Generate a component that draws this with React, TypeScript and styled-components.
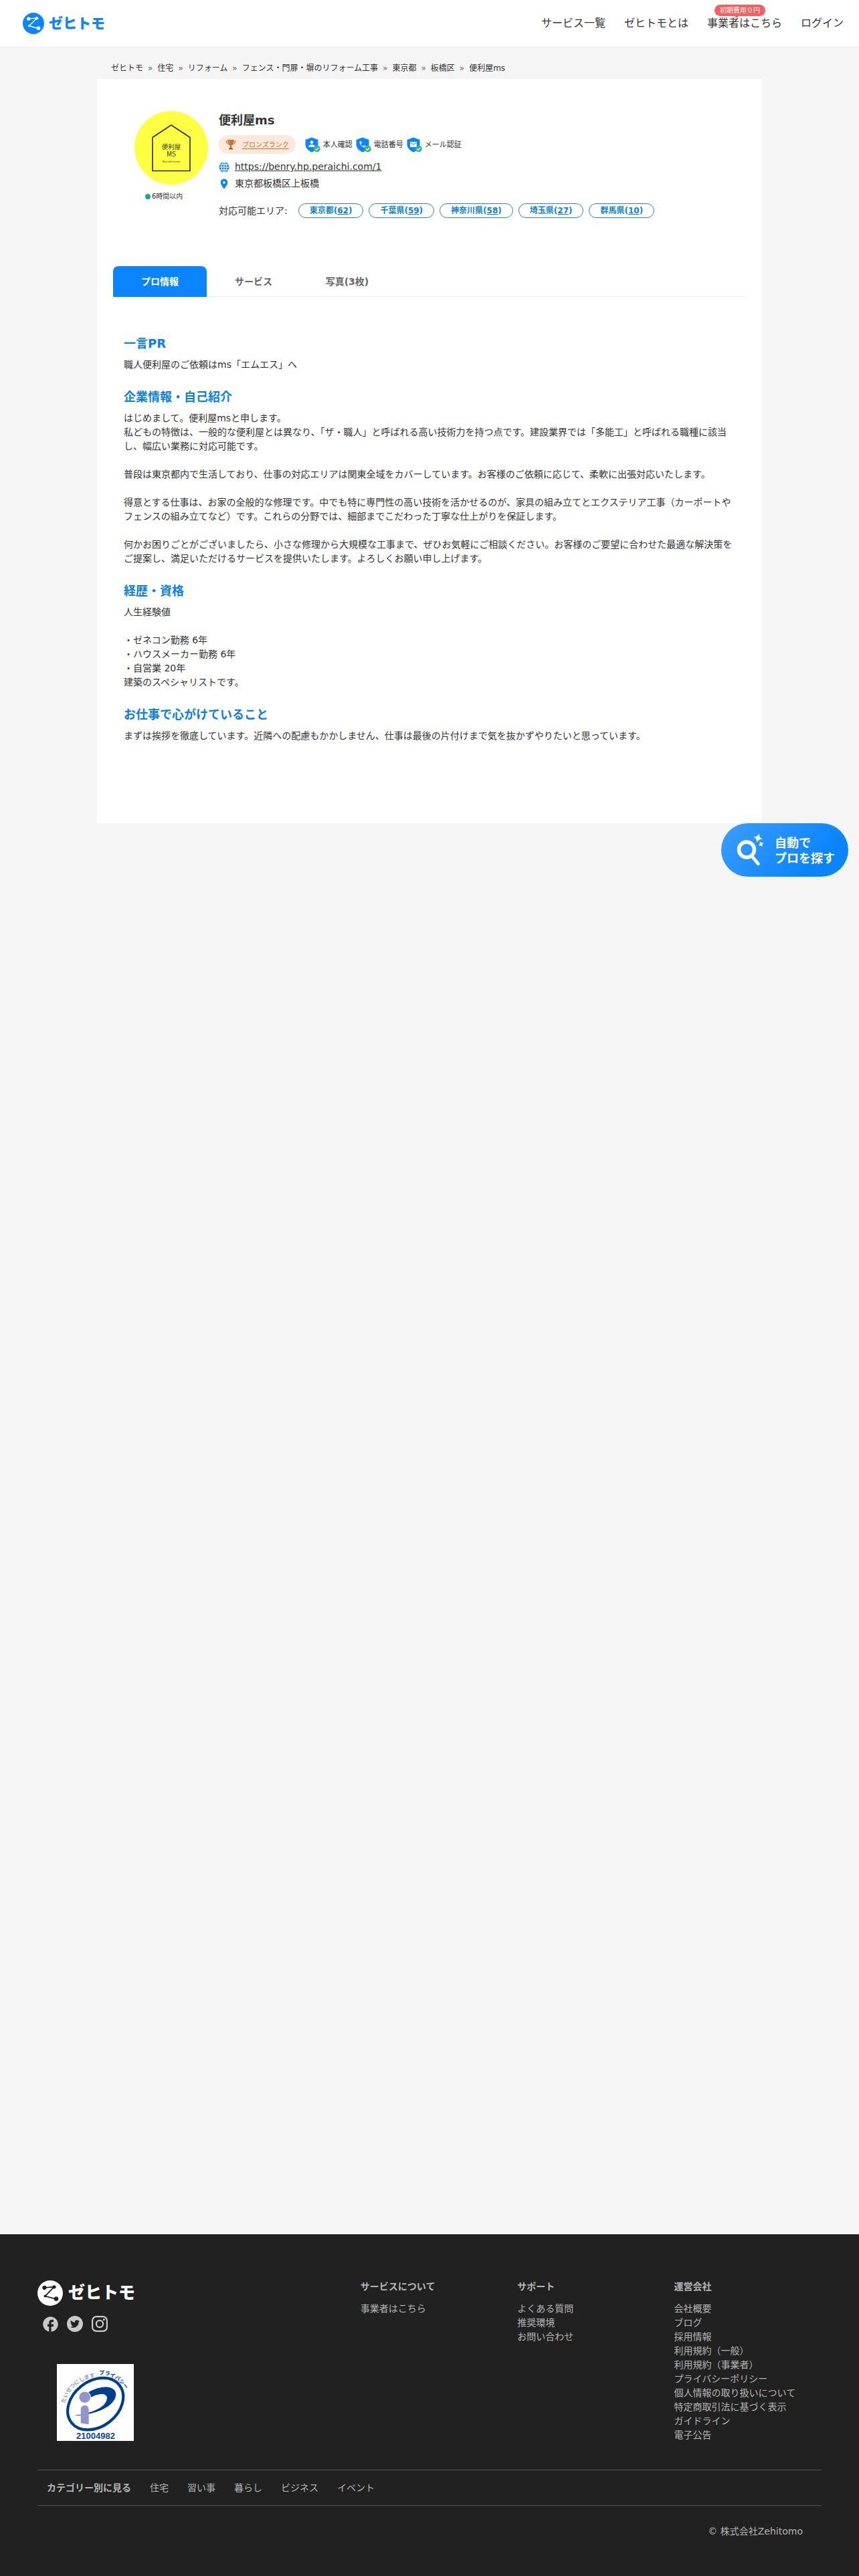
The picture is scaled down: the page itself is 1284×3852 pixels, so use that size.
import React, { useState } from "react";
import styled, { createGlobalStyle, css } from "styled-components";
import { FaTwitter } from "react-icons/fa";
import { MdEmail, MdFacebook, MdPerson, MdPhone, MdPlace } from "react-icons/md";

const color = {
  blue: "#0a85ff",
  heading: "#0a80e3",
  text: "#333333",
  page: "#f5f5f5",
  bronze: "#c8742f",
  footer: "#212121",
  footerText: "#b5b5b5",
};

const GlobalStyle = createGlobalStyle`
  *, *::before, *::after { box-sizing: border-box; }
  body {
    margin: 0;
    background: ${color.page};
    color: ${color.text};
    font-family: "DejaVu Sans", "Noto Sans CJK JP", sans-serif;
    font-size: 14px;
    line-height: 21px;
  }
  a { color: inherit; text-decoration: none; }
  ul, ol { margin: 0; padding: 0; list-style: none; }
  h1, h2, h3, p { margin: 0; }
  button { font: inherit; border: 0; cursor: pointer; }
  svg { display: block; flex: none; }
`;

const Page = styled.div`
  min-height: 100vh;
  display: flex;
  flex-direction: column;
`;

/* ---------- Logo ---------- */

const LogoLink = styled.a<{ $large?: boolean; $tone: string }>`
  display: flex;
  align-items: center;
  gap: ${(p) => (p.$large ? 8 : 7)}px;
  color: ${(p) => p.$tone};
  font-size: ${(p) => (p.$large ? 25 : 21)}px;
  font-weight: 900;
  line-height: ${(p) => (p.$large ? 38 : 32)}px;
`;

function Logo({ large, tone, mark }: { large?: boolean; tone: string; mark: string }) {
  const size = large ? 38 : 32;
  return (
    <LogoLink href="#" $large={large} $tone={tone}>
      <svg width={size} height={size} viewBox="0 0 38 38" aria-hidden="true">
        <circle cx="19" cy="19" r="19" fill={tone} />
        <path d="M10.4 10.8L25 9.6L11.4 23.5L28 27.8" fill="none" stroke={mark} strokeWidth="1.8" />
        <g fill={mark}>
          <circle cx="10.4" cy="10.8" r="3.1" />
          <circle cx="25" cy="9.8" r="2.6" />
          <circle cx="11.4" cy="23.3" r="1.9" />
          <circle cx="28" cy="27.6" r="3.3" />
        </g>
      </svg>
      <span>ゼヒトモ</span>
    </LogoLink>
  );
}

/* ---------- Header ---------- */

const Header = styled.header`
  display: flex;
  align-items: center;
  justify-content: space-between;
  height: 69px;
  padding: 0 23px 0 34px;
  background: #fff;
`;

const HeaderNav = styled.nav`
  display: flex;
  gap: 28px;
  font-size: 16px;
  line-height: 24px;
`;

const NavLink = styled.a`
  position: relative;
`;

const Balloon = styled.span`
  position: absolute;
  top: -16px;
  left: 11px;
  padding: 0 8px;
  border-radius: 9px;
  background: #f95d5d;
  color: #fff;
  font-size: 10px;
  line-height: 17px;
  white-space: nowrap;

  &::after {
    content: "";
    position: absolute;
    top: 100%;
    left: 30px;
    border: 3px solid transparent;
    border-top-color: #f95d5d;
  }
`;

/* ---------- Breadcrumb ---------- */

const Main = styled.main`
  flex: 1;
`;

const Container = styled.div`
  max-width: 994px;
  margin: 0 auto;
`;

const Breadcrumb = styled.ol`
  display: flex;
  flex-wrap: wrap;
  padding: 24px 21px 7px;
  font-size: 12px;
  line-height: 18px;

  li + li::before {
    content: "»";
    margin: 0 7px;
    color: #666;
  }
`;

/* ---------- Profile ---------- */

const Card = styled.article`
  padding: 48px 24px 120px;
  background: #fff;
`;

const Profile = styled.section`
  display: flex;
  gap: 16px;
  padding-left: 32px;
  margin-bottom: 72px;
`;

const Status = styled.p`
  display: flex;
  align-items: center;
  gap: 2px;
  margin-top: 10px;
  padding-left: 16px;
  font-size: 10px;
  line-height: 16px;

  &::before {
    content: "";
    width: 8px;
    height: 8px;
    border-radius: 50%;
    background: #14a697;
  }
`;

const Info = styled.div`
  flex: 1;
  min-width: 0;
`;

const Name = styled.h1`
  font-size: 18px;
  line-height: 28px;
`;

const Badges = styled.div`
  display: flex;
  flex-wrap: wrap;
  align-items: center;
  gap: 14px;
  margin: 8px 0 9px;
`;

const Rank = styled.a`
  display: flex;
  align-items: center;
  gap: 9px;
  height: 28px;
  padding: 0 10px;
  border-radius: 14px;
  background: #fce9dc;
  color: ${color.bronze};
  font-size: 10px;

  span {
    text-decoration: underline;
    text-underline-offset: 2px;
  }
`;

const Checks = styled.ul`
  display: flex;
  gap: 5px;
  font-size: 11px;

  li {
    display: flex;
    align-items: center;
    gap: 4px;
  }
`;

const ContactRow = styled.p`
  display: flex;
  align-items: center;
  gap: 8px;

  & + & {
    margin-top: 4px;
  }

  a {
    text-decoration: underline;
  }
`;

const ContactIcon = styled.span`
  display: flex;
  justify-content: center;
  width: 16px;
  color: ${color.blue};
`;

const Areas = styled.div`
  display: flex;
  align-items: center;
  gap: 16px;
  margin-top: 19px;
`;

const AreaList = styled.ul`
  display: flex;
  flex-wrap: wrap;
  gap: 8px;
`;

const AreaPill = styled.a`
  display: block;
  padding: 0 16px;
  border: 1px solid #2a86cc;
  border-radius: 11px;
  color: ${color.heading};
  font-size: 12px;
  font-weight: bold;
  line-height: 20px;

  span {
    text-decoration: underline;
  }
`;

/* ---------- Tabs ---------- */

const TabList = styled.div`
  display: flex;
  border-bottom: 1px solid #e9edef;
`;

const Tab = styled.button<{ $active: boolean }>`
  width: 140px;
  height: 46px;
  margin-bottom: -1px;
  padding: 0;
  border-radius: 8px 8px 0 0;
  background: transparent;
  color: #666;
  font-weight: bold;

  ${(p) =>
    p.$active &&
    css`
      background: ${color.blue};
      color: #fff;
    `}
`;

const Panel = styled.div`
  display: grid;
  gap: 24px;
  padding: 56px 16px 0;
`;

const SectionTitle = styled.h2`
  margin-bottom: 8px;
  color: ${color.heading};
  font-size: 18px;
  line-height: 27px;
`;

const SectionText = styled.p`
  white-space: pre-line;
`;

/* ---------- Floating search button ---------- */

const SearchBar = styled.div`
  display: flex;
  justify-content: flex-end;
  padding-right: 16px;
`;

const SearchButton = styled.button`
  display: flex;
  align-items: center;
  gap: 15px;
  height: 80px;
  padding: 0 20px 0 23px;
  border-radius: 40px;
  background: linear-gradient(135deg, #3d9dff 0%, #0a85ff 75%);
  color: #fff;
  font-family: "Noto Sans CJK JP", sans-serif;
  font-size: 18px;
  font-weight: bold;
  line-height: 23px;
  text-align: left;
`;

/* ---------- Footer ---------- */

const Footer = styled.footer`
  padding: 69px 56px 57px;
  background: ${color.footer};
  color: ${color.footerText};
`;

const FooterColumns = styled.div`
  display: grid;
  grid-template-columns: 2fr 1fr 1fr 1fr;
  padding-bottom: 41px;
`;

const Social = styled.ul`
  display: flex;
  gap: 13px;
  margin: 15px 0 48px 7px;
  color: #c9c9c9;

  a {
    display: flex;
    align-items: center;
    justify-content: center;
    width: 24px;
    height: 24px;
  }
`;

const TwitterDisc = styled.span`
  display: flex;
  align-items: center;
  justify-content: center;
  width: 24px;
  height: 24px;
  border-radius: 50%;
  background: #c9c9c9;
  color: ${color.footer};
`;

const SealBox = styled.a`
  display: block;
  width: 115px;
  margin-left: 29px;
  background: #fff;
`;

const FooterColumn = styled.div`
  padding-left: 14px;
`;

const FooterTitle = styled.h3`
  margin-bottom: 14px;
  font-size: 14px;
  line-height: 18px;
`;

const Categories = styled.nav`
  display: flex;
  flex-wrap: wrap;
  align-items: center;
  gap: 0 28px;
  padding: 16px 14px 15px;
  border: solid #565656;
  border-width: 1px 0;
`;

const Copyright = styled.p`
  margin-top: 28px;
  padding-right: 28px;
  line-height: 20px;
  text-align: right;
`;

/* ---------- Drawings ---------- */

function Avatar() {
  return (
    <svg width="110" height="110" viewBox="0 0 110 110" role="img" aria-label="便利屋ms">
      <circle cx="55" cy="55" r="55" fill="#fcff42" />
      <path d="M27 39.5L55 21L83 39.5V89.5H27Z" fill="none" stroke="#2b2a10" strokeWidth="1.6" />
      <g fill="#3a3915" textAnchor="middle" fontFamily='"Noto Sans CJK JP", sans-serif'>
        <text x="55" y="56.5" fontSize="9.5">便利屋</text>
        <text x="55" y="68" fontSize="10">MS</text>
        <text x="55" y="77" fontSize="3">BenriyaMsConcept</text>
      </g>
    </svg>
  );
}

function Trophy() {
  return (
    <svg width="16" height="16" viewBox="0 0 16 16" aria-hidden="true">
      <path d="M4 3H1.2C1.3 5.8 2.6 7.3 5 7.5M12 3h2.8C14.7 5.8 13.4 7.3 11 7.5" fill="none" stroke="#c8742f" strokeWidth="1.1" />
      <path d="M3.4 1h9.2c0 4.8-1 7.8-3.4 8.6v2.9h-2.4V9.6C4.4 8.8 3.4 5.8 3.4 1z" fill="#c8742f" />
      <path d="M5.3 2c0 2.8.5 4.8 1.5 6" fill="none" stroke="#e0a06c" strokeWidth="1" />
      <path d="M4.8 15.5c0-1.6 1.2-2.8 3.2-3.2 2 .4 3.2 1.6 3.2 3.2z" fill="#a75a20" />
    </svg>
  );
}

function Shield({ children }: { children: React.ReactNode }) {
  return (
    <svg width="23" height="23" viewBox="0 0 23 23" aria-hidden="true">
      <path d="M10 0.5L19.5 4V10.5C19.5 16 15.5 20.5 10 22.5C4.5 20.5 0.5 16 0.5 10.5V4Z" fill={color.blue} />
      <g color="#fff">{children}</g>
      <circle cx="17.8" cy="17.5" r="5" fill="#3cb67f" />
      <path d="M15.3 17.6l1.8 1.8 3.2-3.5" fill="none" stroke="#fff" strokeWidth="1.1" />
    </svg>
  );
}

function Globe() {
  return (
    <svg width="16" height="16" viewBox="0 0 16 16" aria-hidden="true">
      <circle cx="8" cy="8" r="7.7" fill="#1886dc" />
      <g fill="none" stroke="#fff" strokeWidth="1">
        <ellipse cx="8" cy="8" rx="3.8" ry="7.7" />
        <path d="M8 0v16M0 8h16M1 4.2h14M1 11.8h14" />
      </g>
    </svg>
  );
}

function MagicSearch() {
  return (
    <svg width="42" height="50" viewBox="0 0 42 50" aria-hidden="true">
      <circle cx="15" cy="24.5" r="11.5" fill="none" stroke="#fff" strokeWidth="5.6" />
      <path d="M23 34.5L32.3 45.5" stroke="#fff" strokeWidth="5" strokeLinecap="round" />
      <g fill="#fff">
        <path d="M34 0C33.6 4.5 35 7 39 8.7C34.5 8.7 32 10 30.2 14.2C30.5 9.5 29 7 24.8 5.2C29.5 5.4 32.2 4 34 0Z" />
        <path d="M34.5 12C35.8 14 37.5 14.6 40.5 14C38.5 15.5 38 17 38.7 20.3C37 18.2 35.5 17.7 32.5 18.5C34.7 16.8 35.2 15.2 34.5 12Z" />
      </g>
    </svg>
  );
}

function Instagram() {
  return (
    <svg width="24" height="24" viewBox="0 0 24 24" aria-hidden="true">
      <rect x="1.1" y="1.1" width="21.8" height="21.8" rx="6" fill="none" stroke="currentColor" strokeWidth="2.2" />
      <circle cx="12" cy="12" r="5.1" fill="none" stroke="currentColor" strokeWidth="2.2" />
      <circle cx="18.4" cy="5.6" r="1.5" fill="currentColor" />
    </svg>
  );
}

function PrivacySeal() {
  return (
    <svg width="115" height="115" viewBox="0 0 115 115" role="img" aria-label="プライバシーマーク">
      <defs>
        <path id="seal-left" d="M12 59C17 37 34 22 64 18" />
        <path id="seal-right" d="M63 16C81 15 95 24 104 41" />
      </defs>
      <ellipse cx="57.7" cy="59.7" rx="45.5" ry="34" transform="rotate(-38 57.7 59.7)" fill="none" stroke="#003e92" strokeWidth="4.2" />
      <path
        d="M46 43C56 37 66 34.3 74 34.3C84 35 88.500 40 88.3 46C87 61 66 71.500 46 75C38 76.500 32 77.500 26 76.500C42 76 74 67.500 75 51C75 42 60 44 49 51Z"
        fill="#003e92"
      />
      <circle cx="41.7" cy="49.7" r="9.3" fill="#fff" />
      <circle cx="41.7" cy="49.7" r="8.3" fill="#9394cb" />
      <path d="M35.7 67.7a6 6 0 0 1 12 0V90.3L35.7 88.600Z" fill="#9394cb" />
      <g fontFamily='"Noto Sans CJK JP", sans-serif' fontWeight="bold">
        <text fontSize="8" fill="#9394cb">
          <textPath href="#seal-left">たいせつにします</textPath>
        </text>
        <text fontSize="8" fill="#003e92">
          <textPath href="#seal-right">プライバシー</textPath>
        </text>
      </g>
      <text x="58" y="112" fontSize="13" fontWeight="bold" textAnchor="middle" fontFamily='"Liberation Sans", sans-serif' fill="#0b4596">
        21004982
      </text>
    </svg>
  );
}

/* ---------- Data ---------- */

const crumbs = ["ゼヒトモ", "住宅", "リフォーム", "フェンス・門扉・塀のリフォーム工事", "東京都", "板橋区"];

const checks = [
  { label: "本人確認", icon: <MdPerson x={3} y={3} size={14} /> },
  { label: "電話番号", icon: <MdPhone x={4} y={5} size={12} /> },
  { label: "メール認証", icon: <MdEmail x={4} y={5} size={12} /> },
];

const areas: [string, number][] = [
  ["東京都", 62],
  ["千葉県", 59],
  ["神奈川県", 58],
  ["埼玉県", 27],
  ["群馬県", 10],
];

const tabs = ["プロ情報", "サービス", "写真(3枚)"];

const sections = [
  { title: "一言PR", text: "職人便利屋のご依頼はms「エムエス」へ" },
  {
    title: "企業情報・自己紹介",
    text: `はじめまして。便利屋msと申します。
私どもの特徴は、一般的な便利屋とは異なり、「ザ・職人」と呼ばれる高い技術力を持つ点です。建設業界では「多能工」と呼ばれる職種に該当し、幅広い業務に対応可能です。

普段は東京都内で生活しており、仕事の対応エリアは関東全域をカバーしています。お客様のご依頼に応じて、柔軟に出張対応いたします。

得意とする仕事は、お家の全般的な修理です。中でも特に専門性の高い技術を活かせるのが、家具の組み立てとエクステリア工事（カーポートやフェンスの組み立てなど）です。これらの分野では、細部までこだわった丁寧な仕上がりを保証します。

何かお困りごとがございましたら、小さな修理から大規模な工事まで、ぜひお気軽にご相談ください。お客様のご要望に合わせた最適な解決策をご提案し、満足いただけるサービスを提供いたします。よろしくお願い申し上げます。`,
  },
  {
    title: "経歴・資格",
    text: `人生経験値

・ゼネコン勤務 6年
・ハウスメーカー勤務 6年
・自営業 20年
建築のスペシャリストです。`,
  },
  {
    title: "お仕事で心がけていること",
    text: "まずは挨拶を徹底しています。近隣への配慮もかかしません、仕事は最後の片付けまで気を抜かずやりたいと思っています。",
  },
];

const footerColumns = [
  { title: "サービスについて", links: ["事業者はこちら"] },
  { title: "サポート", links: ["よくある質問", "推奨環境", "お問い合わせ"] },
  {
    title: "運営会社",
    links: [
      "会社概要",
      "ブログ",
      "採用情報",
      "利用規約（一般）",
      "利用規約（事業者）",
      "プライバシーポリシー",
      "個人情報の取り扱いについて",
      "特定商取引法に基づく表示",
      "ガイドライン",
      "電子公告",
    ],
  },
];

const categories = ["住宅", "習い事", "暮らし", "ビジネス", "イベント"];

export default function App() {
  const [active, setActive] = useState(0);

  return (
    <Page>
      <GlobalStyle />
      <Header>
        <Logo tone={color.blue} mark="#fff" />
        <HeaderNav>
          <NavLink href="#">サービス一覧</NavLink>
          <NavLink href="#">ゼヒトモとは</NavLink>
          <NavLink href="#">
            事業者はこちら
            <Balloon>初期費用０円</Balloon>
          </NavLink>
          <NavLink href="#">ログイン</NavLink>
        </HeaderNav>
      </Header>

      <Main>
        <Container>
          <Breadcrumb>
            {crumbs.map((c) => (
              <li key={c}>
                <a href="#">{c}</a>
              </li>
            ))}
            <li>便利屋ms</li>
          </Breadcrumb>

          <Card>
            <Profile>
              <div>
                <Avatar />
                <Status>6時間以内</Status>
              </div>
              <Info>
                <Name>便利屋ms</Name>
                <Badges>
                  <Rank href="#">
                    <Trophy />
                    <span>ブロンズランク</span>
                  </Rank>
                  <Checks>
                    {checks.map((c) => (
                      <li key={c.label}>
                        <Shield>{c.icon}</Shield>
                        {c.label}
                      </li>
                    ))}
                  </Checks>
                </Badges>
                <ContactRow>
                  <ContactIcon>
                    <Globe />
                  </ContactIcon>
                  <a href="#">https://benry.hp.peraichi.com/1</a>
                </ContactRow>
                <ContactRow>
                  <ContactIcon>
                    <MdPlace size={18} />
                  </ContactIcon>
                  東京都板橋区上板橋
                </ContactRow>
                <Areas>
                  <span>対応可能エリア:</span>
                  <AreaList>
                    {areas.map(([name, count]) => (
                      <li key={name}>
                        <AreaPill href="#">
                          {name}(<span>{count}</span>)
                        </AreaPill>
                      </li>
                    ))}
                  </AreaList>
                </Areas>
              </Info>
            </Profile>

            <TabList role="tablist">
              {tabs.map((t, i) => (
                <Tab key={t} role="tab" aria-selected={i === active} $active={i === active} onClick={() => setActive(i)}>
                  {t}
                </Tab>
              ))}
            </TabList>

            <Panel role="tabpanel">
              {sections.map((s) => (
                <section key={s.title}>
                  <SectionTitle>{s.title}</SectionTitle>
                  <SectionText>{s.text}</SectionText>
                </section>
              ))}
            </Panel>
          </Card>
        </Container>

        <SearchBar>
          <SearchButton type="button">
            <MagicSearch />
            <span>
              自動で
              <br />
              プロを探す
            </span>
          </SearchButton>
        </SearchBar>
      </Main>

      <Footer>
        <FooterColumns>
          <div>
            <Logo large tone="#fff" mark={color.footer} />
            <Social>
              <li>
                <a href="#" aria-label="Facebook">
                  <MdFacebook size={27} />
                </a>
              </li>
              <li>
                <a href="#" aria-label="Twitter">
                  <TwitterDisc>
                    <FaTwitter size={14} />
                  </TwitterDisc>
                </a>
              </li>
              <li>
                <a href="#" aria-label="Instagram">
                  <Instagram />
                </a>
              </li>
            </Social>
            <SealBox href="#">
              <PrivacySeal />
            </SealBox>
          </div>
          {footerColumns.map((col) => (
            <FooterColumn key={col.title}>
              <FooterTitle>{col.title}</FooterTitle>
              <ul>
                {col.links.map((l) => (
                  <li key={l}>
                    <a href="#">{l}</a>
                  </li>
                ))}
              </ul>
            </FooterColumn>
          ))}
        </FooterColumns>
        <Categories>
          <strong>カテゴリー別に見る</strong>
          {categories.map((c) => (
            <a key={c} href="#">
              {c}
            </a>
          ))}
        </Categories>
        <Copyright>© 株式会社Zehitomo</Copyright>
      </Footer>
    </Page>
  );
}
